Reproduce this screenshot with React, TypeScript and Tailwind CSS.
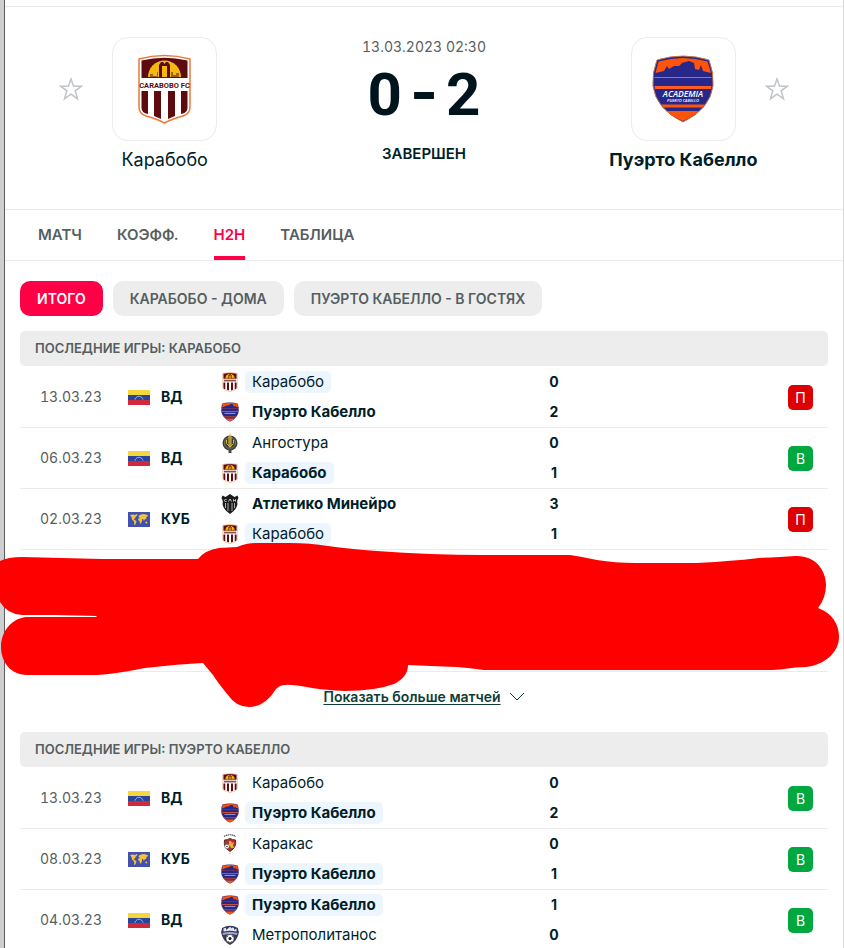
import React, { useState } from 'react';
import clsx from 'clsx';

type TeamId = 'carabobo' | 'puerto' | 'angostura' | 'mineiro' | 'caracas' | 'metropolitanos';
interface Side { team: TeamId; goals: number; winner?: boolean; }
interface Match { date: string; league: 'ВД' | 'КУБ'; home: Side; away: Side; result: 'П' | 'В'; }

const TEAM_NAMES: Record<TeamId, string> = {
  carabobo: 'Карабобо',
  puerto: 'Пуэрто Кабелло',
  angostura: 'Ангостура',
  mineiro: 'Атлетико Минейро',
  caracas: 'Каракас',
  metropolitanos: 'Метрополитанос',
};

const TABS = ['МАТЧ', 'КОЭФФ.', 'H2H', 'ТАБЛИЦА'];
const FILTERS = ['ИТОГО', 'КАРАБОБО - ДОМА', 'ПУЭРТО КАБЕЛЛО - В ГОСТЯХ'];

const CARABOBO_MATCHES: Match[] = [
  { date: '13.03.23', league: 'ВД', home: { team: 'carabobo', goals: 0 }, away: { team: 'puerto', goals: 2, winner: true }, result: 'П' },
  { date: '06.03.23', league: 'ВД', home: { team: 'angostura', goals: 0 }, away: { team: 'carabobo', goals: 1, winner: true }, result: 'В' },
  { date: '02.03.23', league: 'КУБ', home: { team: 'mineiro', goals: 3, winner: true }, away: { team: 'carabobo', goals: 1 }, result: 'П' },
];

const PUERTO_MATCHES: Match[] = [
  { date: '13.03.23', league: 'ВД', home: { team: 'carabobo', goals: 0 }, away: { team: 'puerto', goals: 2, winner: true }, result: 'В' },
  { date: '08.03.23', league: 'КУБ', home: { team: 'caracas', goals: 0 }, away: { team: 'puerto', goals: 1, winner: true }, result: 'В' },
  { date: '04.03.23', league: 'ВД', home: { team: 'puerto', goals: 1, winner: true }, away: { team: 'metropolitanos', goals: 0 }, result: 'В' },
];

function CaraboboLogo({ className, detailed }: { className: string; detailed?: boolean }) {
  return (
    <svg viewBox="0 0 53 70" className={className} aria-hidden="true">
      <path d="M1 5Q26-2 52 5V53Q52 60 45 62Q34 65 26.500 69Q19 65 8 62Q1 60 1 53Z" fill="#fff" stroke="#ec7a3c" strokeWidth="1.500" />
      <path d="M3.500 6.500Q26 1 49.500 6.500V24H3.500Z" fill="#5e0b10" />
      <path d="M10 23A16.500 16.500 0 0 1 43 23Z" fill="#f5b80f" />
      <path d="M21 23V11L23 8H25L26.500 10L28 8H30L32 11V23H29V12H24V23Z" fill="#5e0b10" />
      <path d="M12 23V20H15V22H19V18H20V23ZM33 23V18H35V21H38V19H41V23Z" fill="#a0601a" />
      {detailed ? (
        <text x="26.500" y="33.500" textAnchor="middle" fontSize="7.500" fontWeight="700" fill="#5e0b10" fontFamily="Roboto, sans-serif">CARABOBO FC</text>
      ) : (
        <path d="M5 27H48V33H5Z" fill="#8a4a4c" />
      )}
      <path d="M3.500 37H10V60Q3.500 59 3.500 54ZM16 37H23V65L16 62ZM30 37H37V62L30 65ZM43 37H49.500V54Q49.500 59 43 60Z" fill="#5e0b10" />
    </svg>
  );
}

function PuertoLogo({ className, detailed }: { className: string; detailed?: boolean }) {
  return (
    <svg viewBox="0 0 62 68" className={className} aria-hidden="true">
      <path d="M5 5Q31-3 57 5Q62 18 61 31Q58 54 31 67Q4 54 1 31Q0 18 5 5Z" fill="#27278a" stroke="#c5754a" />
      <path d="M6.500 6.500Q31-.5 55.500 6.500L59 18L51 16L49 10L47 15L43 14L42 8L37 6L30 8L27 11L22 11L17 14L15 11L12 16L3.500 18Z" fill="#ff5409" />
      <path d="M2.500 22H59.500V23H2.500ZM2.500 31H59.500L59 34H3Z" fill="#ff5a1f" />
      <path d="M9 49.500H53L50.500 52.500H11.500ZM14.500 56H47.500Q41 61.500 31 66Q21 61.500 14.500 56Z" fill="#ff5409" />
      {detailed && (
        <>
          <text x="31" y="42" textAnchor="middle" fontSize="8.500" fontWeight="600" fontStyle="italic" fill="#fff" fontFamily="Open Sans, sans-serif">ACADEMIA</text>
          <text x="31" y="47" textAnchor="middle" fontSize="4" fontWeight="600" fontStyle="italic" fill="#fff" fontFamily="Open Sans, sans-serif">PUERTO CABELLO</text>
        </>
      )}
      {!detailed && <path d="M12 37H50V41H12Z" fill="#8d8dc9" />}
    </svg>
  );
}

function AngosturaLogo({ className }: { className: string }) {
  return (
    <svg viewBox="0 0 16 20" className={className} aria-hidden="true">
      <circle cx="8" cy="10" r="7.500" fill="#3b3d3f" />
      <circle cx="8" cy="10" r="5.500" fill="none" stroke="#8f8a6a" strokeWidth=".8" />
      <path d="M8 0L9.500 4V13L8 15L6.500 13V4Z" fill="#e3c22c" />
      <path d="M4.500 7V10.500L8 14L11.500 10.500V7" fill="none" stroke="#d5b52e" strokeWidth="1" />
      <path d="M8 3V13" stroke="#3b3d3f" strokeWidth=".6" />
      <path d="M3 15.500H13L9.500 17V20H6.500V17Z" fill="#4b4b45" />
    </svg>
  );
}

function MineiroLogo({ className }: { className: string }) {
  return (
    <svg viewBox="0 0 17 20" className={className} aria-hidden="true">
      <path d="M1 1.500L4 3L8.500 0L13 3L16 1.500L17 4Q15 7 16 10Q15 16 8.500 20Q2 16 1 10Q2 7 0 4Z" fill="#1c1c1c" />
      <path d="M4 9V14M6.500 9V17M10.500 9V17M13 9V14" stroke="#b9b9b9" strokeWidth=".9" />
      <path d="M5 5.500H4Q3 5.500 3 6.500T4 7.500H5M7 7.500L8.500 5L10 7.500M12 7.500V5.500L13 6.500L14 5.500V7.500" fill="none" stroke="#eee" strokeWidth=".8" />
    </svg>
  );
}

function CaracasLogo({ className }: { className: string }) {
  return (
    <svg viewBox="0 0 16 20" className={className} aria-hidden="true">
      <path d="M2 2.500Q8-1 14 2.500" fill="none" stroke="#55504c" strokeWidth="1.200" strokeDasharray="1.500 .5" />
      <path d="M2.500 6Q5.500 6 8 4.500Q10.500 6 13.500 6Q15 13 8 17.500Q1 13 2.500 6Z" fill="#b5302a" stroke="#4b2a25" />
      <path d="M7 7H9L10 9L12 8L11 11L12 14H9L8 12L5 13L7 10Z" fill="#e9b13b" />
      <circle cx="5" cy="12.500" r="2.300" fill="#fff" stroke="#444" strokeWidth=".5" />
      <circle cx="5" cy="12.500" r=".8" fill="#333" />
      <path d="M8 18.500L9 19.200L8 20L7 19.200Z" fill="#d8b04a" />
    </svg>
  );
}

function MetropolitanosLogo({ className }: { className: string }) {
  return (
    <svg viewBox="0 0 18 20" className={className} aria-hidden="true">
      <path d="M1 3Q9-1.500 17 3Q17 5 18 7Q16.500 16 9 20Q1.500 16 0 7Q1 5 1 3Z" fill="#393a5c" />
      <path d="M2.500 6V3.500L5 2.800V5L7 3.500L9 1.800L11 3.500V2.500L13 3V5L15.500 3.500V6.500Q9 5 2.500 6.500Z" fill="#dfe6f5" />
      <path d="M1.500 8Q9 6 16.500 8L16 10Q9 8 2 10Z" fill="#a5a8c0" />
      <circle cx="9" cy="13.500" r="4" fill="#fff" stroke="#222" strokeWidth=".5" />
      <path d="M9 11.700L10.700 13L10 15H8L7.300 13ZM5.500 12L6.500 11L7 12ZM12.500 12L11.500 11L11 12ZM7 16.700L8 16.200V17.300ZM11 16.700L10 16.200V17.300Z" fill="#222" />
    </svg>
  );
}

function TeamLogo({ team }: { team: TeamId }) {
  const cls = 'h-5 w-[18px] shrink-0';
  switch (team) {
    case 'carabobo': return <CaraboboLogo className={cls} />;
    case 'puerto': return <PuertoLogo className={cls} />;
    case 'angostura': return <AngosturaLogo className={cls} />;
    case 'mineiro': return <MineiroLogo className={cls} />;
    case 'caracas': return <CaracasLogo className={cls} />;
    default: return <MetropolitanosLogo className={cls} />;
  }
}

function LeagueFlag({ league }: { league: Match['league'] }) {
  if (league === 'ВД') {
    return (
      <svg viewBox="0 0 22 15" className="h-[15px] w-[22px]" aria-hidden="true">
        <path d="M0 0H22V5H0Z" fill="#f5d63d" />
        <path d="M0 5H22V10H0Z" fill="#28459b" />
        <path d="M0 10H22V15H0Z" fill="#cf2a3c" />
        <path d="M7 9.500Q8 6.500 11 6.300Q14 6.500 15 9.500" fill="none" stroke="#b9cbea" strokeWidth="1" strokeDasharray="1.500 .4" />
      </svg>
    );
  }
  return (
    <svg viewBox="0 0 22 15" className="h-[15px] w-[22px]" aria-hidden="true">
      <path d="M0 0H22V15H0Z" fill="#4250b0" />
      <path d="M2 3L5 2.500L7 3L9 2L9.500 3L7.500 5L7 6.500L5.500 7L6.500 8L8.500 9L8 11L7 13L6.300 13L6 9.500L4 7.500L3.500 5ZM10.500 5L11 3.500L13 2.500L16 2L19.500 3L20 4L18.500 5L18 7L16.500 7.500L16 9L15 7L14 7L14 9L13 11.500L12 11.500L11.500 9L10 8L10.500 6.500L12 6ZM17 10L19 9.500L19.500 11L18 11.500Z" fill="#f3c23b" />
    </svg>
  );
}

function StarButton({ label }: { label: string }) {
  return (
    <button type="button" aria-label={label} className="flex size-6 items-center justify-center text-[#c0c4c6]">
      <svg viewBox="0 0 24 24" className="size-6" fill="none" stroke="currentColor" strokeWidth="1.500" aria-hidden="true">
        <path d="M12 2L14.600 9.300H22.300L16.200 13.900L18.500 21.800L12 17.100L5.500 21.800L7.800 13.900L1.700 9.300H9.400Z" />
      </svg>
    </button>
  );
}

function LogoBox({ children }: { children: React.ReactNode }) {
  return (
    <div className="flex h-[104px] w-[105px] items-center justify-center rounded-2xl border border-[#ececec]">{children}</div>
  );
}

function TeamLine({ side, selected }: { side: Side; selected: TeamId }) {
  return (
    <div className="flex h-[30px] items-center gap-1.5 pl-px">
      <TeamLogo team={side.team} />
      <span className={clsx('h-[22px] rounded-[5px] px-[7px] leading-[22px]', side.team === selected && 'bg-[#edf5fe]', side.winner && 'font-bold')}>
        {TEAM_NAMES[side.team]}
      </span>
    </div>
  );
}

function MatchTable({ title, matches, selected, emptyRows = 0 }: { title: string; matches: Match[]; selected: TeamId; emptyRows?: number }) {
  return (
    <>
      <h2 className="h-[35px] rounded-[5px] bg-[#ededed] px-[15px] text-[13px] leading-[35px] font-semibold text-[#555e61]">{title}</h2>
      <table className="mt-px w-full table-fixed border-separate border-spacing-0 text-[15px] [&_td]:border-b [&_td]:border-[#ebebeb]">
        <colgroup>
          <col className="w-[108px]" />
          <col className="w-[92px]" />
          <col className="w-[320px]" />
          <col className="w-7" />
          <col />
        </colgroup>
        <tbody>
          {matches.map(match => (
            <tr key={match.date}>
              <td className="pl-5 text-sm text-[#555e61] tabular-nums">{match.date}</td>
              <td>
                <div className="flex items-center gap-[11px] text-sm font-bold">
                  <LeagueFlag league={match.league} />
                  {match.league}
                </div>
              </td>
              <td className="h-[61px]">
                <TeamLine side={match.home} selected={selected} />
                <TeamLine side={match.away} selected={selected} />
              </td>
              <td className="text-center text-sm font-bold">
                <div className="leading-[30px]">{match.home.goals}</div>
                <div className="leading-[30px]">{match.away.goals}</div>
              </td>
              <td className="pr-[15px]">
                <span className={clsx('ml-auto block size-[25px] rounded-[5px] text-center text-sm leading-[25px] text-white', match.result === 'В' ? 'bg-[#00a83f]' : 'bg-[#dc0000]')}>
                  {match.result}
                </span>
              </td>
            </tr>
          ))}
          {Array.from({ length: emptyRows }, (_, i) => (
            <tr key={i}><td colSpan={5} className="h-[61px]" /></tr>
          ))}
        </tbody>
      </table>
    </>
  );
}

// red marker strokes over the last two rows
function Scribble() {
  return (
    <svg viewBox="0 0 844 170" className="pointer-events-none absolute top-[209px] -left-5 h-[170px] w-[844px] max-w-none" aria-hidden="true">
      <path
        d="M0 21Q8 17 22 17L102 19L198 19Q205 10 219 8L237 7Q246 3 256 3H290Q310 3 328 6Q350 9 377 11Q430 15 484 15H570Q578 16 597 20Q615 23 635 23H689Q703 23 727 21Q744 20 759 18Q780 17 795 16C815 15 826 30 826 45Q826 58 818 68C832 73 839 84 839 97C839 112 825 125 806 127Q796 127 784 129Q775 130 770 130H484Q470 128 457 127Q430 126 408 125Q408 137 394 144Q375 151 345 151Q325 150 312 148Q290 144 285 145Q280 145 276 149Q265 167 249 167Q236 167 228 155Q218 143 213 135L203 123Q180 124 145 128Q115 134 97 135H27C10 135 1 121 1 107C1 91 12 78 27 77H96L97 76L54 75H22Q7 74 0 62Z"
        fill="#ff0000"
      />
    </svg>
  );
}

export default function App() {
  const [tab, setTab] = useState('H2H');
  const [filter, setFilter] = useState('ИТОГО');

  return (
    <div className="flex h-screen overflow-hidden bg-white font-['Inter',sans-serif] text-[#001e28]">
      <div className="w-[5px] shrink-0 border-r border-[#5c5c5c] bg-[#cdcfd0]" />
      <main className="min-w-0 flex-1 border-r border-[#dcdcdc]">
        <header className="mt-1.5 border-t border-[#ebebeb]">
          <div className="grid h-[202px] grid-cols-3 px-[30px] pt-[30px] text-center">
            <div>
              <div className="grid grid-cols-[1fr_auto_1fr] items-center">
                <div className="flex justify-end pr-[29px]"><StarButton label="Карабобо" /></div>
                <LogoBox><CaraboboLogo className="h-[70px] w-[53px]" detailed /></LogoBox>
              </div>
              <a href="#carabobo" className="mt-1 block text-lg leading-[30px]">Карабобо</a>
            </div>
            <div>
              <div className="text-sm leading-5 text-[#555e61] tabular-nums">13.03.2023 02:30</div>
              <div className="mt-1 flex h-[68px] items-center justify-center gap-2 font-['Roboto',sans-serif] text-6xl font-bold text-[#00141e]">
                <span>0</span>
                <span className="font-['Inter',sans-serif] [font-feature-settings:'case']">-</span>
                <span>2</span>
              </div>
              <div className="mt-[15px] text-[15px] leading-5 font-semibold">ЗАВЕРШЕН</div>
            </div>
            <div>
              <div className="grid grid-cols-[1fr_auto_1fr] items-center">
                <span />
                <LogoBox><PuertoLogo className="h-[68px] w-[62px]" detailed /></LogoBox>
                <div className="flex pl-[29px]"><StarButton label="Пуэрто Кабелло" /></div>
              </div>
              <a href="#puerto-cabello" className="mt-1 block text-lg leading-[30px] font-bold">Пуэрто Кабелло</a>
            </div>
          </div>
        </header>

        <nav className="flex h-[52px] gap-[35px] border-y border-[#ebebeb] px-[33px] text-[15px] font-semibold">
          {TABS.map(item => (
            <a
              key={item}
              href="#tab"
              onClick={() => setTab(item)}
              className={clsx('border-b-4 leading-[50px]', item === tab ? 'border-[#ff0046] text-[#ff0046]' : 'border-transparent text-[#555e61]')}
            >
              {item}
            </a>
          ))}
        </nav>

        <div className="px-[15px]">
          <div className="flex gap-2.5 pt-5 pb-[15px]">
            {FILTERS.map(item => (
              <button
                key={item}
                type="button"
                onClick={() => setFilter(item)}
                className={clsx('h-[35px] rounded-[10px] px-[17px] text-sm font-semibold', item === filter ? 'bg-[#ff0046] text-white' : 'bg-[#ededed] text-[#555e61]')}
              >
                {item}
              </button>
            ))}
          </div>

          <section className="relative">
            <MatchTable title="ПОСЛЕДНИЕ ИГРЫ: КАРАБОБО" matches={CARABOBO_MATCHES} selected="carabobo" emptyRows={2} />
            <div className="flex h-[60px] justify-center pt-[15px]">
              <a href="#more" className="flex h-5 items-center gap-2 text-sm leading-5 font-semibold text-[#0f3d35]">
                <span className="underline underline-offset-2">Показать больше матчей</span>
                <svg viewBox="0 0 16 10" className="h-2.5 w-4" fill="none" stroke="currentColor" aria-hidden="true">
                  <path d="M1 1L8 8L15 1" />
                </svg>
              </a>
            </div>
            <Scribble />
          </section>

          <section>
            <MatchTable title="ПОСЛЕДНИЕ ИГРЫ: ПУЭРТО КАБЕЛЛО" matches={PUERTO_MATCHES} selected="puerto" />
          </section>
        </div>
      </main>
    </div>
  );
}
